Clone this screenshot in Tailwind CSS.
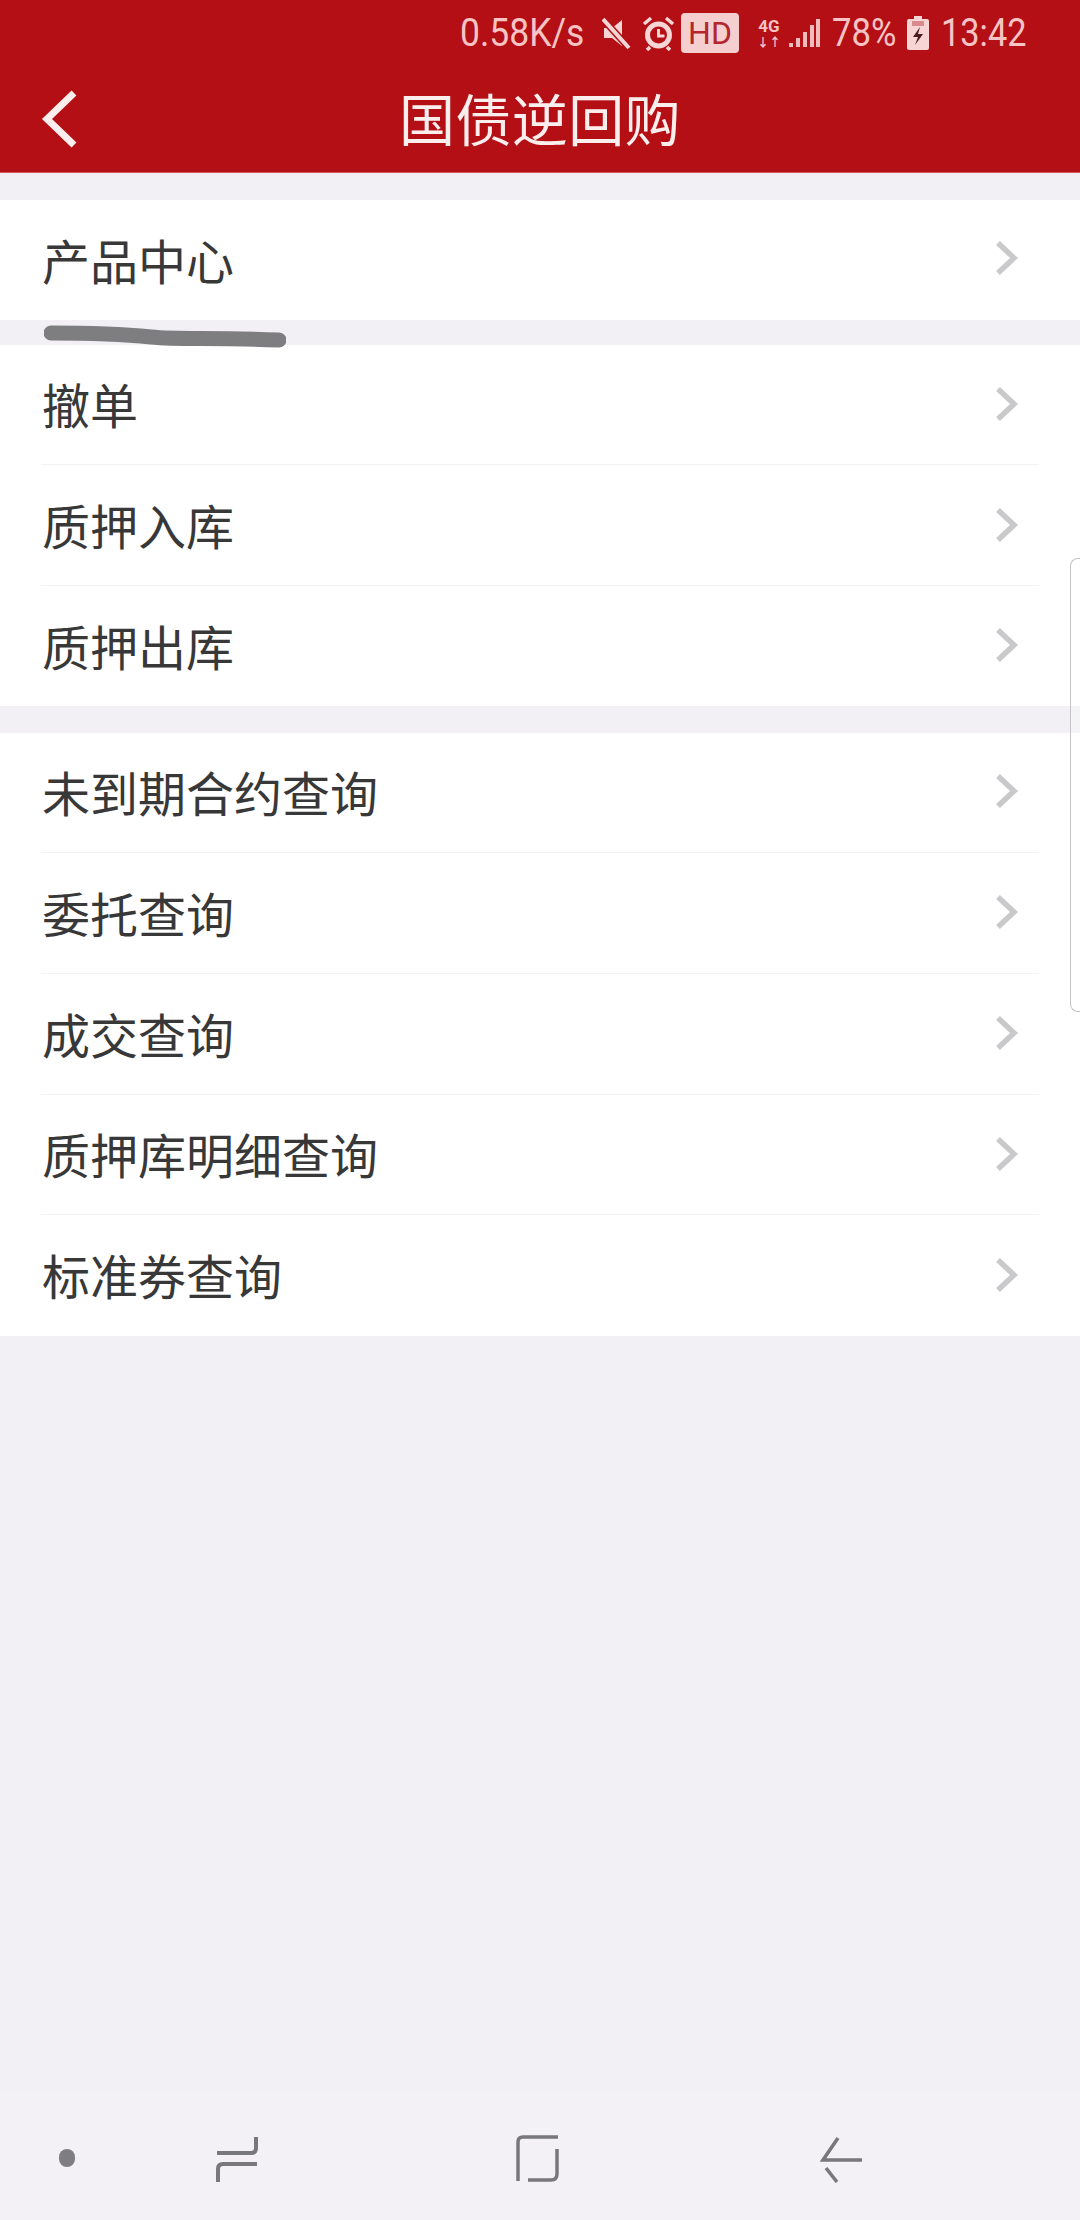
<!DOCTYPE html>
<html lang="zh-CN">
<head>
  <meta charset="UTF-8">
  <meta name="viewport" content="width=device-width, initial-scale=1.0">
  <title>国债逆回购</title>
  <script src="https://cdn.jsdelivr.net/npm/@tailwindcss/browser@4"></script>
</head>
<body class="bg-[#f2f0f4] font-['Roboto','Noto_Sans_CJK_SC',sans-serif]">
  <div class="relative w-[1080px] h-[2220px] flex flex-col overflow-hidden">

    <!-- header -->
    <header class="h-[173px] bg-[#b30f15] border-b border-[#d4575a] flex flex-col shrink-0">
      <div class="h-[66px] flex items-center pl-[460px] text-[#f6c4c4] text-[39px] leading-none">
        <span class="block w-[123px] origin-left scale-x-[.91] whitespace-nowrap">0.58K/s</span>
        <svg class="ml-[19px]" width="29" height="34" viewBox="0 0 29 34" fill="#f7d5d5">
          <path d="M2 12h8l10-8v26l-10-8H2z"/>
          <path d="M1 3l26 29" stroke="#b30f15" stroke-width="7"/>
          <path d="M1 3l26 29" stroke="#f7d5d5" stroke-width="4"/>
        </svg>
        <svg class="ml-[11px]" width="33" height="35" viewBox="0 0 33 35" fill="none" stroke="#f7d5d5">
          <circle cx="16.5" cy="19" r="11" stroke-width="5"/>
          <path d="M16.5 13v7h6" stroke-width="3"/>
          <path d="M2 8l7-6M31 8l-7-6M8 31l-3 3M25 31l3 3" stroke-width="3.5"/>
        </svg>
        <span class="ml-[6px] w-[58px] h-[40px] rounded-[4px] bg-[#f5cfd0] text-[#b3262b] text-[32px] flex items-center justify-center">HD</span>
        <div class="ml-[19px] w-[22px] flex flex-col items-center leading-none text-[17px] font-bold">
          <span>4G</span>
          <span class="text-[12px] mt-[2px]">↓↑</span>
        </div>
        <svg class="ml-[9px]" width="31" height="32" viewBox="0 0 31 32" fill="#f3bcbc">
          <path d="M0 26h4v4H0zM7 21h4v9H7zM14 15h4v15h-4zM21 8h4v22h-4zM27 2h4v28h-4z"/>
        </svg>
        <span class="block ml-[12px] w-[63px] origin-left scale-x-[.89] whitespace-nowrap">78%</span>
        <svg class="ml-[12px]" width="22" height="34" viewBox="0 0 22 34">
          <path d="M7 0h8v3h5a2 2 0 0 1 2 2v27a2 2 0 0 1-2 2H2a2 2 0 0 1-2-2V5a2 2 0 0 1 2-2h5z" fill="#f7d5d5"/>
          <path d="M5 5h12v5H5z" fill="#d98a8c"/>
          <path d="M13 11l-7 10h5l-3 8 8-11h-5z" fill="#4a1a1e"/>
        </svg>
        <span class="block ml-[12px] w-[83px] origin-left scale-x-[.88] whitespace-nowrap">13:42</span>
      </div>
      <div class="relative flex-1 flex items-center justify-center text-[#fdeeee] text-[56px] leading-none pt-[5px]">
        <svg class="absolute left-[41px] top-[23px]" width="38" height="60" viewBox="0 0 38 60" fill="none" stroke="#fdeeee" stroke-width="7">
          <path d="M33 4L6 30l27 26"/>
        </svg>
        <span class="tracking-[0.4px]">国债逆回购</span>
      </div>
    </header>

    <!-- menu groups -->
    <section class="mt-[27px] bg-white px-[41px]">
      <a class="h-[120px] pt-[7px] pl-[1px] pr-[20px] flex items-center justify-between text-[48px] text-[#383838] leading-none">
        <span>产品中心</span>
        <svg class="mb-[12px]" width="24" height="36" viewBox="0 0 24 36" fill="none" stroke="#c9c9cb" stroke-width="5.5"><path d="M3 3l16 15L3 33"/></svg>
      </a>
    </section>

    <section class="mt-[25px] bg-white px-[41px] flex flex-col divide-y divide-[#f3f3f5]">
      <a class="h-[120px] pt-[7px] pl-[1px] pr-[20px] flex items-center justify-between text-[48px] text-[#383838] leading-none">
        <span>撤单</span>
        <svg class="mb-[8px]" width="24" height="36" viewBox="0 0 24 36" fill="none" stroke="#c9c9cb" stroke-width="5.5"><path d="M3 3l16 15L3 33"/></svg>
      </a>
      <a class="h-[121px] pt-[7px] pl-[1px] pr-[20px] flex items-center justify-between text-[48px] text-[#383838] leading-none">
        <span>质押入库</span>
        <svg class="mb-[8px]" width="24" height="36" viewBox="0 0 24 36" fill="none" stroke="#c9c9cb" stroke-width="5.5"><path d="M3 3l16 15L3 33"/></svg>
      </a>
      <a class="h-[120px] pt-[7px] pl-[1px] pr-[20px] flex items-center justify-between text-[48px] text-[#383838] leading-none">
        <span>质押出库</span>
        <svg class="mb-[10px]" width="24" height="36" viewBox="0 0 24 36" fill="none" stroke="#c9c9cb" stroke-width="5.5"><path d="M3 3l16 15L3 33"/></svg>
      </a>
    </section>

    <section class="mt-[27px] bg-white px-[41px] flex flex-col divide-y divide-[#f3f3f5]">
      <a class="h-[120px] pt-[7px] pl-[1px] pr-[20px] flex items-center justify-between text-[48px] text-[#383838] leading-none">
        <span>未到期合约查询</span>
        <svg class="mb-[10px]" width="24" height="36" viewBox="0 0 24 36" fill="none" stroke="#c9c9cb" stroke-width="5.5"><path d="M3 3l16 15L3 33"/></svg>
      </a>
      <a class="h-[121px] pt-[7px] pl-[1px] pr-[20px] flex items-center justify-between text-[48px] text-[#383838] leading-none">
        <span>委托查询</span>
        <svg class="mb-[10px]" width="24" height="36" viewBox="0 0 24 36" fill="none" stroke="#c9c9cb" stroke-width="5.5"><path d="M3 3l16 15L3 33"/></svg>
      </a>
      <a class="h-[121px] pt-[7px] pl-[1px] pr-[20px] flex items-center justify-between text-[48px] text-[#383838] leading-none">
        <span>成交查询</span>
        <svg class="mb-[10px]" width="24" height="36" viewBox="0 0 24 36" fill="none" stroke="#c9c9cb" stroke-width="5.5"><path d="M3 3l16 15L3 33"/></svg>
      </a>
      <a class="h-[120px] pt-[7px] pl-[1px] pr-[20px] flex items-center justify-between text-[48px] text-[#383838] leading-none">
        <span>质押库明细查询</span>
        <svg class="mb-[8px]" width="24" height="36" viewBox="0 0 24 36" fill="none" stroke="#c9c9cb" stroke-width="5.5"><path d="M3 3l16 15L3 33"/></svg>
      </a>
      <a class="h-[121px] pt-[7px] pl-[1px] pr-[20px] flex items-center justify-between text-[48px] text-[#383838] leading-none">
        <span>标准券查询</span>
        <svg class="mb-[9px]" width="24" height="36" viewBox="0 0 24 36" fill="none" stroke="#c9c9cb" stroke-width="5.5"><path d="M3 3l16 15L3 33"/></svg>
      </a>
    </section>

    <!-- soft nav -->
    <nav class="mt-auto h-[130px] bg-[#f3f1f5] relative shrink-0">
      <span class="absolute left-[59px] top-[59px] w-[16px] h-[18px] rounded-full bg-[#7d7d82]"></span>
      <svg class="absolute left-[215px] top-[45px]" width="44" height="48" viewBox="0 0 44 48" fill="none" stroke="#77777c" stroke-width="4">
        <path d="M2 18h34q5 0 5-5V2"/>
        <path d="M42 29H8q-5 0-5 5v13" />
      </svg>
      <svg class="absolute left-[516px] top-[45px]" width="44" height="48" viewBox="0 0 44 48" fill="none" stroke="#77777c" stroke-width="3.5">
        <path d="M2 46V7q0-5 5-5h35" />
        <path d="M12 45h23q6 0 6-6V14" />
      </svg>
      <svg class="absolute left-[820px] top-[45px]" width="44" height="48" viewBox="0 0 44 48" fill="none" stroke="#77777c" stroke-width="3.5">
        <path d="M18 3L3 25h39" />
        <path d="M6 33l11 14" />
      </svg>
    </nav>

    <!-- marker stroke across the first row -->
    <svg class="absolute left-[44px] top-[325px]" width="242" height="28" viewBox="0 0 242 28" fill="none">
      <path d="M7 8c40 0 70 1 100 4 30 3 60 0 128 3" stroke="#7e7e81" stroke-width="15" stroke-linecap="round"/>
    </svg>

    <!-- edge panel handle -->
    <div class="absolute right-0 top-[558px] w-[10px] h-[454px] rounded-l-[8px] border border-r-0 border-[#c4c4c8] bg-white/20"></div>
  </div>
</body>
</html>
